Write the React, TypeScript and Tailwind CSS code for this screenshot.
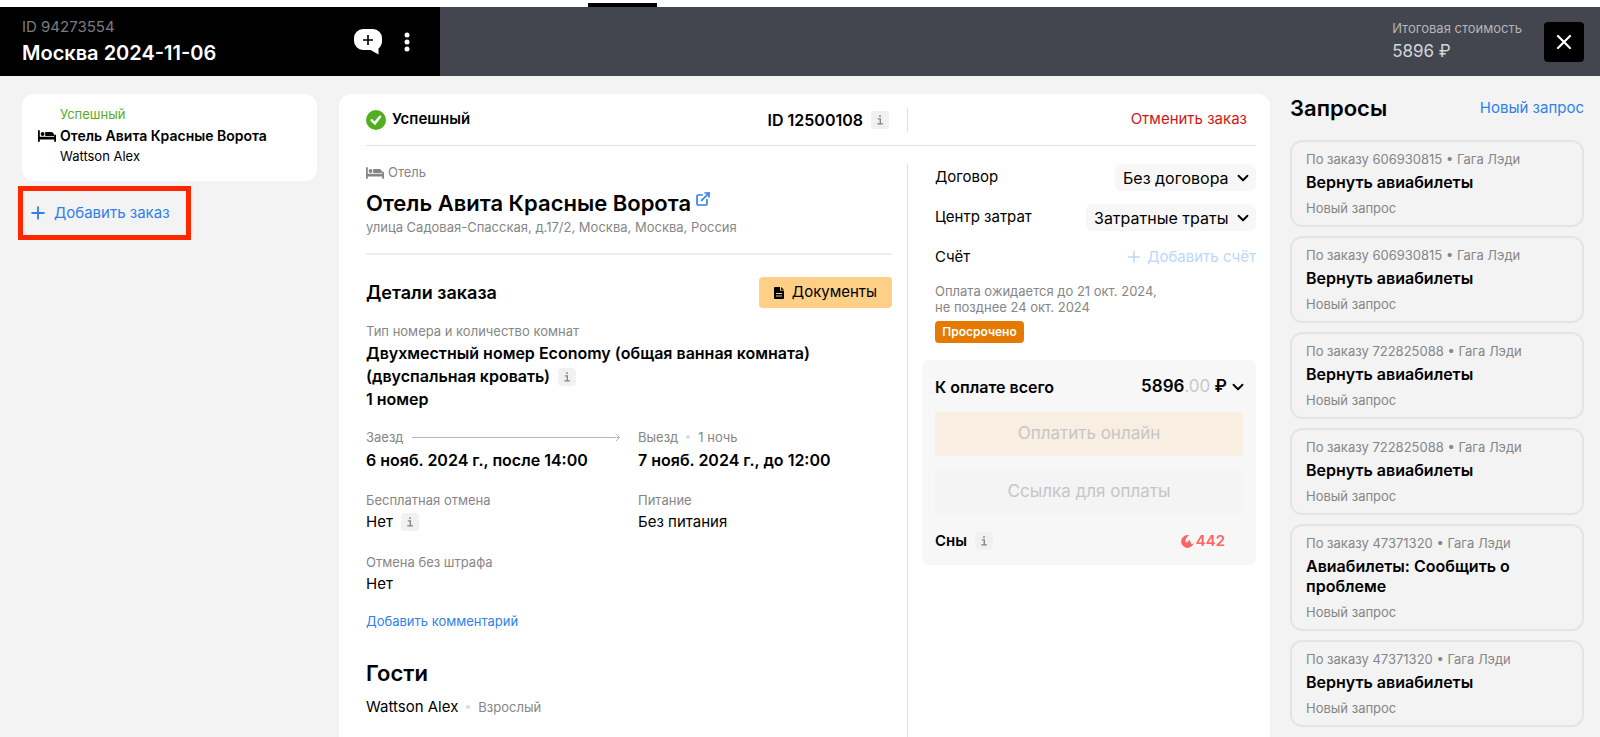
import type { ReactNode } from "react";
import { ChevronDown, ExternalLink, Plus, X } from "lucide-react";

const requests = [
  { id: 1, order: "606930815", title: "Вернуть авиабилеты" },
  { id: 2, order: "606930815", title: "Вернуть авиабилеты" },
  { id: 3, order: "722825088", title: "Вернуть авиабилеты" },
  { id: 4, order: "722825088", title: "Вернуть авиабилеты" },
  { id: 5, order: "47371320", title: "Авиабилеты: Сообщить о проблеме" },
  { id: 6, order: "47371320", title: "Вернуть авиабилеты" },
];

const BedIcon = ({ className }: { className?: string }) => (
  <svg className={className} viewBox="0 0 18 12" fill="currentColor" aria-hidden="true">
    <path d="M0 .9A.9.9 0 011.8.9V6.8H16.2V5.4A.9.9 0 0118 5.4V11.1A.9.9 0 0116.2 11.1V9.6H1.800V11.1A.9.9 0 010 11.1Z" />
    <circle cx="4.600" cy="4" r="1.900" />
    <path d="M7.200 1.900H13A3.400 3.400 0 0116 5.300V6.100H7.200Z" />
  </svg>
);

const InfoButton = ({ label }: { label: string }) => (
  <button
    type="button"
    aria-label={label}
    className="flex h-[18px] w-[18px] shrink-0 items-center justify-center rounded bg-[#f1f1f1] text-[#858585]"
  >
    <svg className="h-3 w-3" viewBox="0 0 12 12" fill="none" stroke="currentColor" strokeWidth="1.4" aria-hidden="true">
      <path d="M3.8 4.9H6.3V9.8M3.3 9.9H9" />
      <path d="M5.2 2.2H6.8" strokeWidth="1.7" />
    </svg>
  </button>
);

const Field = ({ label, children }: { label: string; children: ReactNode }) => (
  <div>
    <dt className="text-[13px] leading-4 text-[#868686]">{label}</dt>
    <dd className="mt-1 flex h-5 items-center gap-2 text-[15px] leading-5">{children}</dd>
  </div>
);

const SelectButton = ({ id, value, width }: { id: string; value: string; width: string }) => (
  <div className={`relative ${width}`}>
    <select
      id={id}
      defaultValue={value}
      className="h-[27px] w-full appearance-none rounded-md bg-[#f7f7f7] pl-2 text-base leading-5 outline-none"
    >
      <option>{value}</option>
    </select>
    <ChevronDown className="pointer-events-none absolute top-[5px] right-1 h-[18px] w-[18px]" strokeWidth={2.5} />
  </div>
);

const Header = () => (
  <header className="flex h-[69px] bg-[#43464e]">
    <div className="flex w-[27.5%] items-center justify-between bg-black pr-[22px] pl-[22px]">
      <div>
        <div className="text-[15px] leading-5 text-[#7d7d7d]">ID 94273554</div>
        <h1 className="mt-[2px] text-xl leading-7 font-semibold text-white">Москва 2024-11-06</h1>
      </div>
      <div className="flex items-center gap-[14px] text-white">
        <button type="button" aria-label="Новое сообщение">
          <svg className="h-[26px] w-7" viewBox="0 0 28 26">
            <path
              d="M9 0H19A9 9 0 0128 9V12Q28 17 24.500 19.500V25.500L16.500 21H9A9 9 0 010 12V9A9 9 0 019 0Z"
              fill="#fff"
            />
            <path d="M14 6V16M9 11H19" stroke="#000" strokeWidth="1.6" />
          </svg>
        </button>
        <button type="button" aria-label="Меню" className="px-2">
          <svg className="h-5 w-[6px]" viewBox="0 0 6 20" fill="currentColor">
            <circle cx="3" cy="3" r="2.5" />
            <circle cx="3" cy="10" r="2.5" />
            <circle cx="3" cy="17" r="2.5" />
          </svg>
        </button>
      </div>
    </div>
    <div className="flex flex-1 items-center justify-end gap-[22px] pr-4">
      <div className="text-[#d5d5d7]">
        <div className="text-[13px] leading-4 text-[#b5b5b9]">Итоговая стоимость</div>
        <div className="mt-[3px] text-[17px] leading-6">5896 ₽</div>
      </div>
      <button
        type="button"
        aria-label="Закрыть"
        className="flex h-10 w-10 items-center justify-center rounded bg-black text-white"
      >
        <X className="h-6 w-6" strokeWidth={2.2} />
      </button>
    </div>
  </header>
);

const OrdersColumn = () => (
  <aside className="w-[317px] shrink-0 pl-[22px]">
    <div className="h-[87px] w-[295px] rounded-xl bg-white pt-3 pl-4">
      <div className="pl-[22px] text-[13px] leading-4 text-[#54ad24]">Успешный</div>
      <div className="mt-1 flex items-center gap-1 text-sm leading-5 font-semibold">
        <BedIcon className="h-3 w-[18px]" />
        Отель Авита Красные Ворота
      </div>
      <div className="mt-[2px] pl-[22px] text-[13px] leading-4">Wattson Alex</div>
    </div>
    <button
      type="button"
      className="mt-[5px] -ml-1 flex h-[54px] w-[173px] items-center gap-[6px] border-5 border-[#ff2600] pl-[5px] text-[15px] text-[#3080ed]"
    >
      <Plus className="h-5 w-5" strokeWidth={2.2} />
      Добавить заказ
    </button>
  </aside>
);

const OrderDetails = () => (
  <div className="flex-1 pr-[15px]">
    <div className="flex h-[18px] items-center gap-1 text-[13px] text-[#868686]">
      <BedIcon className="h-3 w-[18px]" />
      Отель
    </div>
    <div className="mt-[7px] flex gap-1">
      <h2 className="text-[22px] leading-7 font-semibold">Отель Авита Красные Ворота</h2>
      <a href="#hotel" aria-label="Открыть страницу отеля" className="mt-[2px] h-4 text-[#3080ed]">
        <ExternalLink className="h-4 w-4" strokeWidth={2.5} />
      </a>
    </div>
    <p className="mt-[2px] text-[13px] leading-4 text-[#868686]">
      улица Садовая-Спасская, д.17/2, Москва, Москва, Россия
    </p>

    <div className="mt-[18px] flex items-center justify-between border-t-2 border-[#ededed] pt-[22px]">
      <h3 className="text-lg leading-7 font-semibold">Детали заказа</h3>
      <button
        type="button"
        className="flex h-[31px] w-[133px] items-center justify-center gap-2 rounded bg-[#fecf86] text-[15px]"
      >
        <svg className="h-3 w-[10px]" viewBox="0 0 10 12" aria-hidden="true">
          <path d="M1 0H6V3.5H10V11A1 1 0 019 12H1A1 1 0 010 11V1A1 1 0 011 0ZM7 0L10 2.700H7Z" fill="#000" />
          <path d="M2 6.500H8M2 9H8" stroke="#fecf86" strokeWidth="1" />
        </svg>
        Документы
      </button>
    </div>

    <div className="mt-[15px] text-[13px] leading-4 text-[#868686]">Тип номера и количество комнат</div>
    <div className="mt-[3px] text-base leading-[23px] font-semibold">
      <p>Двухместный номер Economy (общая ванная комната)</p>
      <p className="flex items-center gap-2">
        (двуспальная кровать)
        <InfoButton label="О номере" />
      </p>
      <p>1 номер</p>
    </div>

    <dl className="mt-[18px] grid grid-cols-[254px_1fr] gap-x-[18px]">
      <div>
        <dt className="flex items-center gap-2 text-[13px] leading-4 text-[#868686]">
          Заезд
          <svg className="h-2 flex-1 text-[#b8b8b8]" fill="none" stroke="currentColor" aria-hidden="true">
            <line x1="0" y1="4.500" x2="100%" y2="4.500" />
            <svg x="100%" overflow="visible">
              <path d="M-5 .5L-1 4.500L-5 8.500" />
            </svg>
          </svg>
        </dt>
        <dd className="mt-[3px] text-base leading-6 font-semibold">6 нояб. 2024 г., после 14:00</dd>
      </div>
      <div>
        <dt className="flex items-center gap-2 text-[13px] leading-4 text-[#868686]">
          Выезд
          <span className="h-1 w-1 rounded-full bg-[#dcdcdc]" />
          1 ночь
        </dt>
        <dd className="mt-[3px] text-base leading-6 font-semibold">7 нояб. 2024 г., до 12:00</dd>
      </div>
    </dl>

    <dl className="mt-5 grid grid-cols-[254px_1fr] gap-x-[18px] gap-y-[22px]">
      <Field label="Бесплатная отмена">
        Нет <InfoButton label="Об отмене" />
      </Field>
      <Field label="Питание">Без питания</Field>
      <Field label="Отмена без штрафа">Нет</Field>
    </dl>
    <a href="#comment" className="mt-[19px] block text-[13px] leading-4 text-[#3080ed]">
      Добавить комментарий
    </a>

    <h2 className="mt-7 text-[22px] leading-8 font-semibold">Гости</h2>
    <p className="mt-2 flex items-center gap-2 text-[15px] leading-5">
      Wattson Alex
      <span className="h-1 w-1 rounded-full bg-[#dcdcdc]" />
      <span className="text-[13px] text-[#868686]">Взрослый</span>
    </p>
  </div>
);

const Payment = () => (
  <div className="w-[349px] shrink-0 border-l border-[#dedede] pl-[27px]">
    <div className="flex items-center justify-between text-[15px]">
      <label htmlFor="contract">Договор</label>
      <SelectButton id="contract" value="Без договора" width="w-[141px]" />
    </div>
    <div className="mt-[13px] flex items-center justify-between text-[15px]">
      <label htmlFor="cost-center">Центр затрат</label>
      <SelectButton id="cost-center" value="Затратные траты" width="w-[170px]" />
    </div>
    <div className="mt-4 flex h-5 items-center justify-between text-[15px]">
      Счёт
      <button type="button" disabled className="flex items-center gap-1 text-[#bdd7fa]">
        <Plus className="h-[18px] w-[18px]" strokeWidth={2.2} />
        Добавить счёт
      </button>
    </div>
    <p className="mt-4 text-[13px] leading-4 text-[#868686]">
      Оплата ожидается до 21 окт. 2024,
      <br />
      не позднее 24 окт. 2024
    </p>
    <span className="mt-[6px] flex h-[22px] w-[89px] items-center justify-center rounded bg-[#e67a00] text-xs font-semibold text-white">
      Просрочено
    </span>

    <section className="mt-[17px] -ml-[13px] rounded-lg bg-[#f7f7f7] px-[13px] pt-[15px] pb-[14px]">
      <div className="flex h-6 items-center justify-between text-base font-semibold">
        <h3>К оплате всего</h3>
        <button type="button" className="flex items-center gap-[2px] text-[17px]">
          <span>
            5896<span className="font-normal text-[#c8c8c8]">.00</span> ₽
          </span>
          <ChevronDown className="-mr-1 h-[18px] w-[18px]" strokeWidth={2.5} />
        </button>
      </div>
      <button type="button" disabled className="mt-[13px] h-11 w-full rounded bg-[#f8eee1] text-[17px] text-[#c6c6c6]">
        Оплатить онлайн
      </button>
      <button type="button" disabled className="mt-[14px] h-11 w-full rounded bg-[#f4f4f4] text-[17px] text-[#c6c6c6]">
        Ссылка для оплаты
      </button>
      <div className="mt-[17px] flex h-5 items-center gap-2 pr-[18px] text-[15px] font-semibold">
        Сны
        <InfoButton label="О снах" />
        <span className="ml-auto flex items-center gap-[2px] text-[#ff6363]">
          <svg className="h-[13px] w-[13px]" viewBox="0 0 13 13" aria-hidden="true">
            <path
              d="M8.200 .3A6.400 6.400 0 1 0 12.800 7.800Q12 9 10.600 9.200L8.300 4.600L6.800 7.400L5.800 6.600L4.600 8.300Q3.600 3.200 8.200 .3Z"
              fill="currentColor"
            />
          </svg>
          442
        </span>
      </div>
    </section>
  </div>
);

const OrderCard = () => (
  <main className="flex min-w-0 flex-1 flex-col rounded-t-xl bg-white pr-[14px] pl-[27px]">
    <div className="flex h-[52px] shrink-0 items-center border-b border-[#e4e4e4]">
      <div className="flex flex-1 items-center gap-[6px] text-[15px] font-semibold">
        <svg className="h-5 w-5" viewBox="0 0 20 20" fill="none" aria-hidden="true">
          <circle cx="10" cy="10" r="10" fill="#52ae21" />
          <path d="M5.800 10.300L8.800 13.400L14 6.800" stroke="#fff" strokeWidth="2.6" strokeLinecap="round" />
        </svg>
        Успешный
      </div>
      <div className="flex items-center gap-2 pr-[18px] text-base font-semibold">
        ID 12500108
        <InfoButton label="О заказе" />
      </div>
      <div className="flex h-6 w-[349px] items-center justify-end border-l border-[#dedede] pr-[9px]">
        <button type="button" className="text-[15px] text-[#d11515]">
          Отменить заказ
        </button>
      </div>
    </div>
    <div className="mt-[18px] flex flex-1">
      <OrderDetails />
      <Payment />
    </div>
  </main>
);

const Requests = () => (
  <aside className="w-[294px] shrink-0">
    <div className="flex h-7 items-center justify-between">
      <h2 className="text-[22px] font-semibold">Запросы</h2>
      <a href="#new-request" className="text-[15px] text-[#3080ed]">
        Новый запрос
      </a>
    </div>
    <ul className="mt-[18px] space-y-[9px]">
      {requests.map((r) => (
        <li key={r.id} className="rounded-xl border-2 border-[#e4e4e4] px-[14px] py-[9px]">
          <p className="text-[13px] leading-4 text-[#868686]">По заказу {r.order} • Гага Лэди</p>
          <h3 className="mt-[5px] text-base leading-5 font-semibold">{r.title}</h3>
          <p className="mt-2 text-[13px] leading-4 text-[#868686]">Новый запрос</p>
        </li>
      ))}
    </ul>
  </aside>
);

export default function App() {
  return (
    <div className="flex min-h-screen flex-col bg-[#f3f3f3] font-['Inter','Liberation_Sans',sans-serif] text-black">
      <div className="h-[7px] shrink-0 bg-white pt-[3px]">
        <div className="ml-[36.75%] h-1 w-[69px] bg-black" />
      </div>
      <Header />
      <div className="flex flex-1 items-stretch pt-[18px] pr-4">
        <OrdersColumn />
        <div className="ml-[22px] flex min-w-0 flex-1 gap-5">
          <OrderCard />
          <Requests />
        </div>
      </div>
    </div>
  );
}
